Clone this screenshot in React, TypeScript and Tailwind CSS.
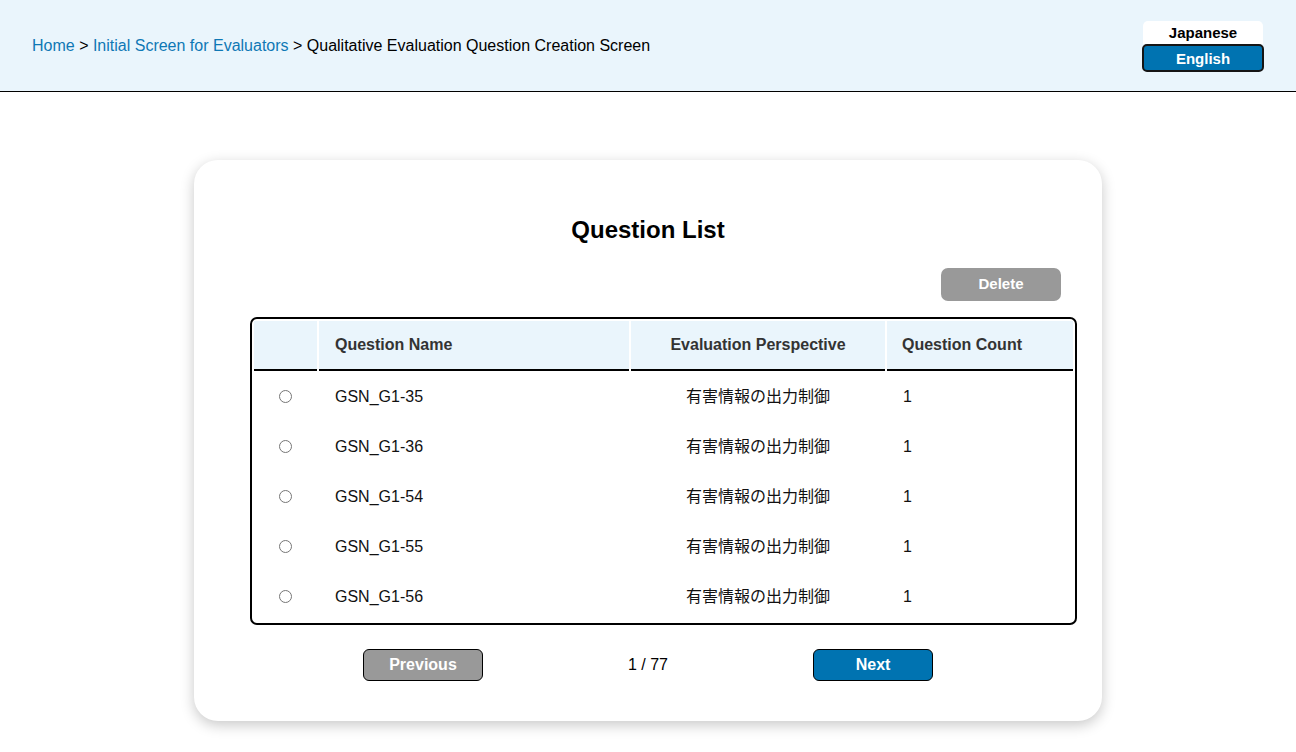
import React, { useState } from "react";

interface QuestionRow {
  id: string;
  name: string;
  perspective: string;
  count: number;
}

const rows: QuestionRow[] = [
  { id: "q35", name: "GSN_G1-35", perspective: "有害情報の出力制御", count: 1 },
  { id: "q36", name: "GSN_G1-36", perspective: "有害情報の出力制御", count: 1 },
  { id: "q54", name: "GSN_G1-54", perspective: "有害情報の出力制御", count: 1 },
  { id: "q55", name: "GSN_G1-55", perspective: "有害情報の出力制御", count: 1 },
  { id: "q56", name: "GSN_G1-56", perspective: "有害情報の出力制御", count: 1 },
];

export default function App() {
  const [selected, setSelected] = useState<string | null>(null);

  return (
    <div className="min-h-screen bg-white font-['Liberation_Sans','Noto_Sans_CJK_JP',sans-serif] text-black">
      {/* Header */}
      <header className="h-[92px] bg-[#eaf5fc] border-b border-black flex items-center justify-between pl-8 pr-8">
        <nav className="text-[16px]">
          <a href="#" className="text-[#0f78b5]">Home</a>
          <span> &gt; </span>
          <a href="#" className="text-[#0f78b5]">Initial Screen for Evaluators</a>
          <span> &gt; Qualitative Evaluation Question Creation Screen</span>
        </nav>
        <div className="flex flex-col items-center mt-[2px]">
          <button className="w-[120px] h-[23px] bg-white rounded-t-[5px] text-[15px] font-bold leading-none">
            Japanese
          </button>
          <button className="w-[122px] h-[28px] bg-[#0073b1] border-2 border-[#151515] rounded-[5px] text-white text-[15px] font-bold leading-none">
            English
          </button>
        </div>
      </header>

      {/* Card */}
      <main className="pt-[68px] pb-8">
        <div className="mx-auto w-[908px] bg-white rounded-[24px] shadow-[0_4px_14px_rgba(0,0,0,0.22)] pt-[56px] pb-[40px]">
          <h1 className="text-center text-[24px] font-bold leading-[28px]">Question List</h1>

          <div className="flex justify-end pr-[41px] mt-[24px]">
            <button className="w-[120px] h-[33px] rounded-[7px] bg-[#999999] text-white text-[15px] font-bold">
              Delete
            </button>
          </div>

          <div className="ml-[56px] mt-[16px]">
            <table className="w-[827px] border-separate border-spacing-0.5 border-2 border-black rounded-[7px] text-[16px]">
              <thead>
                <tr>
                  <th className="w-[63px] h-[50px] bg-[#eaf5fc] border-b-2 border-black"></th>
                  <th className="w-[310px] h-[50px] bg-[#eaf5fc] border-b-2 border-black text-left pl-4 font-bold text-[#333]">
                    Question Name
                  </th>
                  <th className="w-[254px] h-[50px] bg-[#eaf5fc] border-b-2 border-black text-center font-bold text-[#333]">
                    Evaluation Perspective
                  </th>
                  <th className="h-[50px] bg-[#eaf5fc] border-b-2 border-black text-left pl-[15px] font-bold text-[#333]">
                    Question Count
                  </th>
                </tr>
              </thead>
              <tbody>
                {rows.map((row) => (
                  <tr key={row.id}>
                    <td className="h-[48px] text-center">
                      <input
                        type="radio"
                        name="question"
                        checked={selected === row.id}
                        onChange={() => setSelected(row.id)}
                        className="w-[13px] h-[13px] align-middle mb-[3px]"
                      />
                    </td>
                    <td className="h-[48px] pl-4 text-[#111]">{row.name}</td>
                    <td className="h-[48px] text-center text-[#111]">{row.perspective}</td>
                    <td className="h-[48px] pl-4 text-[#111]">{row.count}</td>
                  </tr>
                ))}
              </tbody>
            </table>
          </div>

          {/* Pagination */}
          <div className="flex items-center justify-center gap-[145px] mt-[24px]">
            <button className="w-[120px] h-[32px] rounded-[6px] border border-black bg-[#999999] text-white text-[16px] font-bold">
              Previous
            </button>
            <span className="text-[16px]">1 / 77</span>
            <button className="w-[120px] h-[32px] rounded-[6px] border border-black bg-[#0073b1] text-white text-[16px] font-bold">
              Next
            </button>
          </div>
        </div>
      </main>
    </div>
  );
}
